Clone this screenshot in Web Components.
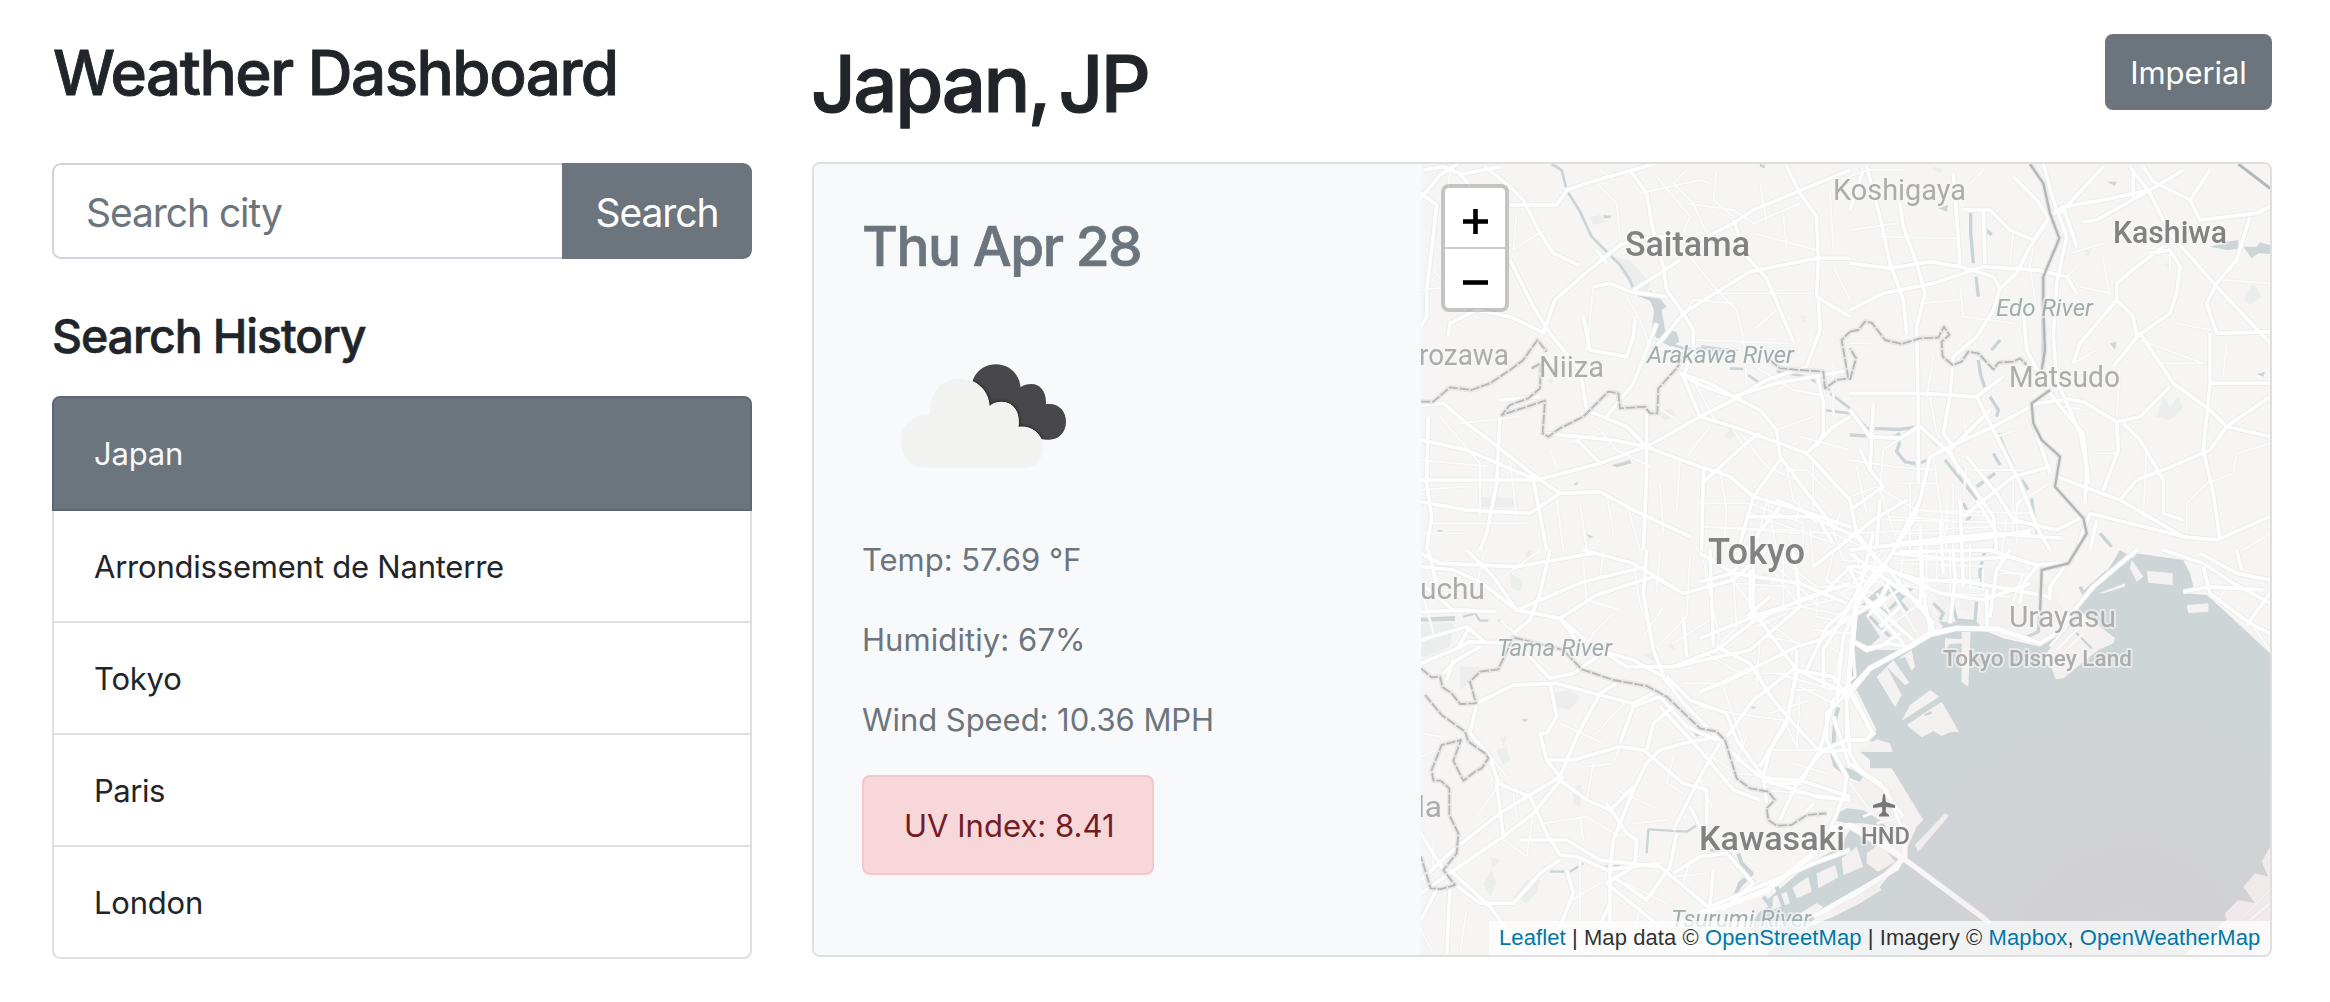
<!DOCTYPE html>
<html lang="en">
<head>
<meta charset="utf-8">
<title>Weather Dashboard</title>
<style>
  body { margin: 0; background: #fff; color: #212529; font-family: Inter, "Liberation Sans", sans-serif; font-size: 31px; line-height: 48px; }
</style>
</head>
<body>
<weather-dashboard>
  <page-title slot="side">Weather Dashboard</page-title>
  <city-search slot="side" placeholder="Search city">Search</city-search>
  <search-history slot="side" label="Search History">
    <history-item active>Japan</history-item>
    <history-item>Arrondissement de Nanterre</history-item>
    <history-item>Tokyo</history-item>
    <history-item style="--ls:-.47px">Paris</history-item>
    <history-item>London</history-item>
  </search-history>
  <city-header slot="main" city="Japan, JP"><unit-toggle>Imperial</unit-toggle></city-header>
  <weather-card slot="main" date="Thu Apr 28">
    <cloud-icon slot="icon"></cloud-icon>
    <weather-stat>Temp: 57.69 °F</weather-stat>
    <weather-stat style="--ls:.08px">Humiditiy: 67%</weather-stat>
    <weather-stat style="--ls:-.05px">Wind Speed: 10.36 MPH</weather-stat>
    <uv-badge>UV Index: 8.41</uv-badge>
    <city-map slot="map"></city-map>
  </weather-card>
</weather-dashboard>

<script>
const define = (name, html) => customElements.define(name, class extends HTMLElement {
  constructor() {
    super();
    const attr = key => this.getAttribute(key) || '';
    this.attachShadow({ mode: 'open' }).innerHTML = typeof html === 'function' ? html(attr) : html;
  }
});

define('weather-dashboard', `
<style>
  :host { display: flex; gap: 60px; padding: 0 58px 0 52px; height: 1002px; box-sizing: border-box; }
  aside { width: 700px; flex: none; padding-top: 35px; }
  main { flex: 1; padding-top: 34px; }
</style>
<aside><slot name="side"></slot></aside>
<main><slot name="main"></slot></main>`);

define('page-title', `
<style>
  :host { display: block; }
  h2 { margin: 0; padding-left: 1px; font-size: 62px; line-height: 76px; font-weight: 500; letter-spacing: -1.5px; -webkit-text-stroke: .9px; white-space: nowrap; }
</style>
<h2><slot></slot></h2>`);

define('city-search', attr => `
<style>
  :host { display: flex; height: 96px; margin-top: 52px; font-size: 39px; letter-spacing: -1.07px; }
  .field { flex: 1; box-sizing: border-box; display: flex; align-items: center; border: 2px solid #ced4da; border-right: 0; border-radius: 9px 0 0 9px; padding: 3px 32px 0; color: #6c757d; }
  button { all: unset; box-sizing: border-box; width: 190px; padding-top: 3px; text-align: center; background: #6c757d; color: #fff; border-radius: 0 9px 9px 0; letter-spacing: -1.07px; }
</style>
<div class="field">${attr('placeholder')}</div>
<button type="button"><slot></slot></button>`);

define('search-history', attr => `
<style>
  :host { display: block; margin-top: 48px; }
  h4 { margin: 0 0 31px; font-size: 46.5px; line-height: 58px; font-weight: 500; letter-spacing: -1.1px; -webkit-text-stroke: .6px; }
  .list { display: flex; flex-direction: column; }
</style>
<h4>${attr('label')}</h4>
<div class="list"><slot></slot></div>`);

define('history-item', `
<style>
  :host { display: flex; align-items: center; box-sizing: border-box; height: 112px; padding: 1px 40px 0; border: solid #dfdfdf; border-width: 0 2px 2px; letter-spacing: var(--ls, -.21px); background: #fff; }
  :host([active]) { height: 115px; padding-top: 0; border: 2px solid #5f6872; background: #6c757d; color: #f8f9fa; border-radius: 8px 8px 0 0; }
  :host(:last-of-type) { border-radius: 0 0 8px 8px; }
</style>
<slot></slot>`);

define('city-header', attr => `
<style>
  :host { display: flex; justify-content: space-between; align-items: flex-start; height: 128px; }
  h1 { margin: 2px 0 0; font-size: 78px; line-height: 96px; font-weight: 500; letter-spacing: -2.5px; word-spacing: -8px; text-indent: -1px; -webkit-text-stroke: 1.1px; }
</style>
<h1>${attr('city')}</h1><slot></slot>`);

define('unit-toggle', `
<style>
  :host { display: flex; width: 167px; height: 76px; padding-top: 1px; box-sizing: border-box; align-items: center; justify-content: center; background: #6c757d; color: #fff; border-radius: 8px; letter-spacing: -.09px; }
</style>
<slot></slot>`);

define('weather-card', attr => `
<style>
  :host { display: flex; box-sizing: border-box; width: 1460px; height: 795px; border: 2px solid #dfdfdf; border-radius: 8px; overflow: hidden; }
  .body { width: 607px; flex: none; box-sizing: border-box; padding: 49px 48px 0; background: #f8f9fb; color: #6c757d; }
  h3 { margin: 0 0 32px; font-size: 55px; line-height: 66px; font-weight: 500; letter-spacing: -1.5px; -webkit-text-stroke: .7px; }
</style>
<div class="body">
  <h3>${attr('date')}</h3>
  <slot name="icon"></slot>
  <slot></slot>
</div>
<slot name="map"></slot>`);

define('weather-stat', `
<style>:host { display: block; margin-bottom: 32px; letter-spacing: var(--ls, -.03px); white-space: nowrap; }</style>
<slot></slot>`);

define('uv-badge', `
<style>
  :host { display: flex; box-sizing: border-box; width: 292px; height: 100px; margin-top: -1px; padding: 1px 0 0 40px; align-items: center; background: #f8d7da; border: 2px solid #f5c6cb; border-radius: 8px; color: #721c24; letter-spacing: .03px; }
</style>
<slot></slot>`);

define('cloud-icon', `
<style>:host { display: block; width: 206px; height: 225px; } svg { display: block; }</style>
<svg width="206" height="200" viewBox="0 0 206 200">
  <defs><filter id="soft" x="-20%" y="-20%" width="140%" height="140%"><feGaussianBlur stdDeviation="4"/></filter>
  <clipPath id="dark"><path d="M279 120C290 90 318 73 348 73C385 73 417 98 422 142C430 135 442 132 455 132C480 132 500 155 498 193C535 188 558 212 558 246C558 278 535 299 508 299C495 299 490 298 482 296L430 290L300 200Z"/></clipPath>
  <path id="lt" d="M135 383C92 383 62 350 62 304C62 255 100 222 150 224C150 150 190 115 238 116C290 118 325 150 328 202C335 190 352 187 366 187C400 188 420 215 414 262C460 255 489 290 489 322C489 360 465 383 435 383Z"/></defs>
  <g transform="translate(18 29) scale(.33333)">
    <path fill="#48484a" d="M279 120C290 90 318 73 348 73C385 73 417 98 422 142C430 135 442 132 455 132C480 132 500 155 498 193C535 188 558 212 558 246C558 278 535 299 508 299C495 299 490 298 482 296L430 290L300 200Z"/>
    <g clip-path="url(#dark)"><use href="#lt" fill="#222" stroke="#222" stroke-width="8" filter="url(#soft)"/><use href="#lt" fill="#f8f9fb" stroke="#f8f9fb" stroke-width="3"/></g>
    <use href="#lt" fill="#f2f2f0"/>
  </g>
</svg>`);

/* Map geometry is kept in sheets, each drawn at three units per pixel. */
const sheet = (x, y, content) => `<g transform="translate(${x} ${y}) scale(.33333)">${content}</g>`;
const roads = (cls, list) => list.map(d => `<path class="${cls}" d="M${d}"/>`).join('');

const NW = {
  major: [
    '63 145L120 75L175 40M70 60L130 50L180 70L210 110M175 75L300 50M255 50L330 110L370 150L415 240L460 310L535 345M330 165L470 165L500 120L590 90L700 60L770 40',
    '63 130L110 165L95 300L80 420L80 500L63 530M145 560L150 520L230 480L330 500L435 550M330 330L400 470L450 550L490 600',
    '430 550L465 450L550 375L660 285L700 270L790 260L900 270L1000 220L1060 180L1180 130L1350 60M590 300L620 340',
    '690 60L740 130L755 220L790 350L800 420L850 490L880 540L880 600L850 680L900 800',
    '1000 740L930 700L840 670M760 600L850 490L960 420L1050 365L1250 325L1350 325M700 420L780 370L840 330M580 410L630 400L690 425L800 440',
    '1160 50L1200 130L1250 200L1255 330L1250 440L1350 500M1000 210L1040 320L1100 385L1140 480L1180 575M1255 450L1260 540L1220 650L1100 690L1010 740',
    '840 670L900 705L1000 740L1080 780L1130 840L1140 920L1200 1000L1300 1130M1000 740L1130 700L1350 660M900 800L1000 830L1140 880L1220 910L1350 1050',
    '63 765L130 760L200 820L280 880L420 990L480 1030L600 1025L700 1080L870 1160M63 870L200 900L410 990L600 940L750 885L900 800L1020 740',
    '63 990L420 990M63 1055L200 1080L390 1090L480 1030M300 800L290 1000L260 1150L240 1200M400 990L440 1200M85 800L80 1000L95 1100L80 1200',
    '530 870L600 940M430 850L540 860L640 870L740 890L790 910L900 950L990 980L1060 1040L1200 1080L1350 1130M740 790L740 970L730 1200M490 600L540 660L560 780L680 830L740 890',
    '910 960L905 1200M905 1000L1050 870L1080 850M1220 910L1300 830L1350 800M1140 930L1060 1040L1020 1180M620 800L700 700L740 600L770 520M550 500L570 600L680 620L700 560L705 500M300 750L420 740M1250 670L1270 760L1270 850L1250 890'
  ],
  minor: [
    '350 190L340 300L400 260L440 240M150 60L140 200L160 400M200 120L310 250M60 420L160 410M100 360L210 500M590 100L650 160L660 260M860 60L820 100L880 160L920 250M770 80L870 200L830 300M720 130L900 90L930 100M950 60L940 150L1000 200M600 60L640 90M860 160L1000 180L1060 220L1200 160M870 320L950 420L1010 480L1030 560',
    '950 430L1240 430M860 480L880 450L1000 460M1060 250L1250 300M1080 100L1100 220M1150 190L1160 300M1290 130L1300 300M1300 350L1350 450M580 410L560 600M680 440L720 510L750 590M400 600L460 640M1030 570L1040 700M1130 480L1060 540M890 570L1170 580',
    '120 800L240 940L240 1100M180 820L360 800M330 930L350 1100M450 900L470 950M500 880L600 850M60 930L270 950M90 1120L380 1120M470 1050L490 1200M540 1060L560 1200M620 1030L640 1150M680 1060L720 1200M780 1000L790 1150M840 930L830 1080M960 960L980 1080L970 1200M1030 860L1100 950L1190 990M1000 840L1040 900M1130 840L1240 800M880 690L950 820M930 830L860 920M770 770L830 810M590 830L650 900L750 950',
    '1050 1060L1210 1120L1210 1200M1100 1040L1130 1200M1160 950L1180 1050L1250 1120M1240 930L1240 1080M1170 960L1220 960L1280 1020M1050 1090L1300 1180M920 1130L1200 1150M900 1060L1050 1060M1200 860L1350 900M1300 640L1300 800M1050 640L1180 720L1290 740M60 1020L200 1010M60 1150L200 1150'
  ],
  edge: ['63 755L100 755L150 712L215 720L270 700L330 660L370 630L412 570L440 605M395 655L422 640L420 715L385 745L330 765L305 795L435 752L428 850L445 860L480 835L550 800L610 740L625 725L655 730L660 775L735 770L750 790L772 790L775 715L830 655L850 620M1110 630L1140 655L1200 660L1270 665L1275 715L1310 690L1345 685L1325 570L1350 545']
};
const NE = {
  major: [
    '0 340L120 355L240 335L330 350L430 380L450 415M0 480L100 430L250 400L400 350L560 360L650 380L680 430',
    '50 50L90 200L120 340L160 450L170 550M150 160L160 230L200 340L225 430L200 530L205 800L205 1000M310 70L320 200L330 350M400 180L405 340M340 180L420 180L480 240L550 270L600 200L640 170L760 150L900 120L1000 60',
    '0 180L40 60M490 80L560 150L600 210M580 40L610 150L650 260L620 400L610 560L620 690L690 850L710 950L705 1060M630 190L760 50M640 170L680 290M700 215L740 210L900 120M850 60L850 140',
    '840 50L900 130L960 250L1030 330L1100 410L1260 580M880 50L910 95L1020 150L1080 60M1020 150L1050 210L1220 190L1260 170M1200 200L1160 330L1100 400L1070 460L1100 550L1260 545',
    '600 200L540 290L500 370L450 415L430 480L380 560L310 620L300 740L280 850L310 890M520 480L530 600L600 730L640 780L700 850L715 1000',
    '940 290L860 350L800 400L800 450L690 580L670 640M800 450L850 500L860 560L960 490L980 430L990 350L960 300L900 310M790 650L870 550L970 700L1080 780L1130 830L1260 860M1080 550L1080 700L1060 900L1090 1030L1110 1170',
    '1260 700L1080 700M0 730L210 730L380 740L460 680M640 745L700 755L800 815L870 800L960 710M1260 740L1130 830L1080 900L940 960L860 990L810 1050M820 820L870 870L940 990L940 1090L1000 1110',
    '800 815L805 900L760 1020M380 740L440 860L510 1000L560 1130L600 1200M540 790L600 970M300 890L450 820L560 760L640 750M620 980L700 1010L810 1050L1000 1160M720 1090L880 1130L1000 1160L1100 1170L1260 1100M720 1090L680 1200M740 1110L720 1200',
    '0 780L60 860L150 865L210 830L290 900L430 1100L440 1200M330 970L300 900L420 780M300 890L240 920L210 1050L130 1200M350 920L440 1030L490 1110L620 1140L700 1100M0 1080L100 1010L60 960L30 900M0 1200L430 1150L640 1165M340 1100L490 980L600 950M70 760L60 960'
  ],
  minor: [
    '0 240L140 220M90 260L320 265M0 80L50 60L160 60M400 60L360 100M210 460L330 450M330 410L340 500L490 520M490 250L480 340M660 310L760 280M550 290L540 350L560 480M690 410L780 430M650 380L680 350M340 170L310 120M740 600L670 640M870 570L1060 640L930 640M1120 390L1260 400M980 520L1080 540M1130 580L1120 680',
    '60 580L0 580M240 740L260 850M0 930L130 950L260 960M100 900L90 1020L150 1200M200 830L100 900M0 1040L80 1010L200 1080L420 1100M120 1100L300 1110M150 1000L260 1000M250 920L290 1200M180 1000L180 1200M310 1000L310 1200M350 950L340 1040M490 990L490 1150M370 960L520 960M440 860L500 840M230 740L250 620M340 800L350 860M730 910L800 910M810 660L800 800M700 780L640 770M890 890L880 1100M1260 880L1160 910L1150 970L1070 1000L1010 1060L1010 1150M1180 1200L1260 1150M760 330L780 440M960 310L960 360M0 1150L430 1130M20 950L50 1090M500 1180L500 1060L600 1000'
  ],
  edge: ['0 545L25 540L45 515L65 518L105 570L155 582L210 565L265 563L282 530L298 555L275 575L278 620L308 645L335 635L355 605L385 610L430 658L445 638L490 635L510 625L530 645', '0 690L18 625L0 595']
};
const SW = {
  major: [
    '63 50L160 60L240 95L350 180L480 205L530 270M63 10L120 40L350 50L580 10M85 0L120 150M200 0L280 80L350 180L550 95L740 50M450 0L420 130L390 210L340 250M63 100L160 180L290 185M63 185L210 180',
    '550 0L700 40L850 130L1000 90L1100 0M740 0L730 130L760 300L800 400M480 205L590 135L760 80L850 130M63 340L160 300L210 275L350 280M63 270L200 230L260 280M210 230L170 300',
    '350 280L450 385L520 370L620 300M130 370L170 330L240 290M160 330L140 390M230 460L340 405L470 400L580 430L700 460L760 430M450 400L470 500L440 550L420 550L440 630L480 680',
    '230 460L210 550L270 620L295 700L390 740L440 850L480 915L530 920L620 960L780 940M480 205L590 300L700 330L790 380L850 460L950 560L1030 640L1090 685L1200 690L1350 740',
    '600 300L680 350L820 350L950 300L1060 215L1200 150L1350 100M820 350L1050 300L1200 170M950 290L1050 340L1120 450L1180 520L1260 605L1350 600M800 380L870 450L980 490L1010 570L1090 680L1100 760',
    '63 990L160 900L300 790L480 680L530 560L600 430L650 400M520 630L660 590L730 600L850 700L920 720L920 820M660 580L700 470L780 440L860 530L950 570',
    '740 640L700 720L640 870L630 960L630 1120M740 640L780 600L850 580L960 560M740 600L760 520L820 470M480 690L560 750L630 780L700 710M440 630L520 630',
    '290 700L310 860L250 900L120 990L63 1030M310 860L400 790L490 680M63 850L130 960M160 1000L240 1060L340 1060L420 970L480 930M150 960L270 1070L350 1180L380 1210M150 1020L140 1210M110 1020L63 1110',
    '360 870L500 870L600 930L780 950L900 1050L980 1120M620 760L680 850L710 870L705 950M640 980L740 1050L810 950L830 850M820 840L900 680L960 580M780 470L900 600L1000 720L1080 750M820 970L900 920L980 910L1060 1000L970 1080M700 950L620 1000L780 1130M630 1060L560 1210',
    '900 830L870 770M1060 215L1060 0M1200 170L1180 0M1220 360L1280 230L1350 170M930 0L940 290M1190 370L1160 520L1110 600L1090 680M1190 350L1060 450L980 560M1090 690L1250 740L1350 750M1300 500L1350 650M1180 830L1240 760M1110 700L1200 700L1260 600L1300 450L1350 400',
    '850 200L860 320M1040 200L1110 140M350 1210L480 1130L520 1030L500 960M940 960L930 1070L1100 1000L1240 940L1350 900'
  ],
  minor: [
    '250 20L220 150M310 80L420 0M100 80L250 150M550 40L560 150L660 180M610 0L600 90M700 40L720 160L750 240M780 0L770 130M640 190L580 250L560 290M790 170L730 260M870 20L860 200L780 280M1000 90L1010 230L960 280M990 0L1000 90M1130 50L1260 170M1100 190L1300 150M1100 260L1200 280M850 400L980 400M970 410L1000 500M1050 350L920 420',
    '560 750L580 640M480 520L610 580M590 550L680 450M660 590L640 640L560 650M820 620L800 700L850 730M700 820L800 810M650 720L780 780M900 690L940 780M1040 560L980 700M340 730L350 800M230 570L320 680M400 790L380 920L300 860M550 870L540 800M660 860L560 800L430 820M820 980L920 970M870 930L850 1000M680 1000L800 1060M540 920L540 1110M100 880L100 960M63 1140L100 1210M200 1080L180 1210M1190 420L1250 420M1100 600L1250 600M1200 430L1190 600M300 700L230 800M63 620L110 600M63 550L120 560M63 110L100 250M300 210L400 300M820 280L930 210M500 1060L600 1000M720 1070L700 1160M1240 240L1350 250M1130 370L1300 420M1000 100L1160 110M1150 0L1150 170'
  ],
  edge: ['63 355L95 382L120 380L128 412L155 430L180 462L228 460L210 395L240 365L295 358L340 262L490 300L545 358L640 390L740 408L800 440L900 535L950 545L975 570L1010 685L1050 715L1105 725L1125 750L1100 775L1105 810L1130 827L1175 825L1220 795L1280 790', '75 435L125 495L195 545L205 575L255 610L265 625L245 655L225 665L190 692L160 632L183 570L125 585L95 660L100 692L122 692L148 715L148 795L175 850L170 910L130 960L165 1005L125 1017L92 1015L63 920']
};
const SE = {
  land: '650 240L700 190L795 265L790 280L745 300L640 385L617 388L605 355L570 330ZM80 380L110 350L155 435L135 472ZM110 350L130 330L178 398L165 405ZM140 330L185 300L195 350L185 362L165 320ZM155 512L180 465L240 420L268 440ZM170 525L275 455L327 545L300 547L275 558L250 543L215 562ZM335 245L362 245L355 410L335 395ZM285 265L335 268L335 280L300 282L285 300ZM30 605L128 605L120 580L80 568L45 590ZM195 885L285 790L297 797L205 905ZM890 62L968 70L968 105L895 98ZM1010 165L1075 160L1075 185L1015 190ZM845 30L880 80L860 95L840 55ZM745 130L825 100L825 110L760 130Z',
  major: [
    '0 430L60 355L180 290L240 255L320 235L440 237L540 270L570 280L610 255L730 110L860 0', '0 570L50 570L65 550L10 430', '0 640L50 680L110 720L160 850L165 920L100 980L0 1045', '0 830L100 890L180 940L410 1110',
    '0 10L110 90L210 160L240 210L250 240M110 60L210 90L350 95L600 140M130 10L330 30L480 20L560 45L640 40M0 60L40 140L190 270M20 110L70 180L160 280M60 190L110 140M90 230L150 170M120 90L90 150L20 190M210 0L215 90L210 160M310 0L315 90L300 220M410 120L410 240M480 0L440 60L420 200M560 50L520 100L510 160',
    '940 0L1060 40L1150 100L1260 160M1000 125L1080 110L1240 120M1060 50L1080 130L1200 220L1260 250M1050 10L1160 70L1260 90M1190 225L1260 130M0 270L50 295L90 290L150 250', '1160 0L1175 60M650 40L600 110L600 150M1260 1060L1200 1110'
  ],
  minor: ['160 0L150 100M260 0L260 90M360 0L360 90M150 40L420 50M130 100L290 130L480 140M360 110L400 120L400 60M620 300L680 240M640 310L700 250M600 290L650 230M10 300L15 380L0 390M0 700L60 780M40 800L110 770M80 820L160 800M450 60L540 80M0 110L50 60L110 20M30 90L100 0M1130 110L1100 160M520 70L480 180M1210 230L1260 300M1260 1020L1180 1100']
};
const CENTRE = {
  major: ['0 245L100 220L150 130L240 20M150 210L150 320L290 510L440 580M0 415L160 350L370 280L450 200L550 200M550 200L720 280L850 300L990 250M550 200L640 60L660 0M450 0L470 100L550 200M440 590L470 300L560 200M430 590L380 640L380 720L440 830L430 890L390 990M440 590L440 720L370 750L290 850L240 960M600 135L700 130L890 110L990 90M600 155L870 150L990 190M530 140L540 0M0 575L90 540L290 440M290 510L400 530L440 590M290 510L260 660L180 800M290 440L360 420L450 350',
    '550 190L480 300L430 410L410 600M520 100L480 260L430 350L370 450L370 560M550 190L700 370M470 430L500 450L560 430L630 440M660 80L670 280L690 390M600 130L760 110L990 100M780 0L790 260M720 60L730 220M830 0L890 100M140 50L330 50L470 110L530 180M230 0L350 50L400 130M340 200L520 60L620 0M0 160L100 220L300 250L440 310M290 450L290 540M450 580L520 700L500 720L440 720M440 630L450 760L480 810L540 850L610 950'],
  minor: ['0 80L250 90L400 100L530 160M10 180L40 330L60 420M90 230L180 350L290 430M210 200L300 320L450 350M220 160L350 260L460 260M270 110L300 250M330 80L340 200M390 60L430 180L540 190M400 160L380 240L450 300M440 200L560 260M400 240L520 280M460 150L500 260M420 280L560 210M430 320L500 320M350 290L350 350L450 370M370 400L460 400M390 440L420 460L400 560M580 100L720 100M560 60L990 70M600 180L730 180M650 30L990 40M680 130L680 290M750 150L750 280M810 130L810 270M650 240L840 240M530 280L610 400M560 250L650 400M500 350L620 250M540 400L660 310M170 380L260 340M0 450L120 520L290 520M180 420L170 550M210 640L330 600M100 640L250 660L290 740M0 620L100 640L130 740M300 560L420 620M280 790L380 820M190 870L400 890M20 760L110 820L200 830L330 850M740 10L740 100M920 50L900 200M900 220L990 220M960 0L940 70M200 0L180 90L160 200M300 0L290 60M420 40L400 100']
};
const SHEETS = [[NW, 1400, 150], [NE, 1850, 150], [SW, 1400, 550], [SE, 1850, 550], [CENTRE, 1700, 500]];
const layer = (cls, key) => SHEETS.map(([s, x, y]) => sheet(x, y, roads(cls, s[key]))).join('');
const EXPRESS = cls => sheet(1700, 500, roads(cls, ['430 590L510 505L630 440L690 400L770 385L890 387L990 420', '540 200L470 300L440 600']))
  + sheet(1700, 740, roads(cls, ['0 520L100 490L200 450L330 350L400 265L450 255L540 305L610 355L870 550', '340 530L480 450L590 385L615 340L610 250']));
const EAST = '540 42L580 100L600 190L628 265L580 380L580 480L585 600L575 660M600 720L545 760L550 820L575 870L630 920L615 1010L700 1105L710 1150L655 1240L575 1260L570 1390';

define('city-map', `
<style>
  :host { display: flex; flex-direction: column; position: relative; flex: 1; background: #f6f5f4; overflow: hidden; }
  .tiles { display: block; width: 849px; height: 791px; filter: blur(.5px); }
  path { fill: none; stroke-linejoin: round; }
  .casing { stroke: #ebeeed; stroke-width: 17; }
  .major { stroke: #fefefe; stroke-width: 10.5; }
  .minorcase { stroke: #edf0ef; stroke-width: 10; }
  .minor { stroke: #fbfbfb; stroke-width: 5.5; }
  .express { stroke: #fdfdfd; stroke-width: 15; }
  .edgeglow { stroke: #e3e3e3; stroke-width: 15; opacity: .7; }
  .edge { stroke: #b9b8b8; stroke-width: 5.5; stroke-dasharray: 28 5; }
  .east { stroke: #b3b6b6; stroke-width: 7; }
  .water { fill: #cdd5d6; }
  .river { stroke: #cad4d6; }
  .land { fill: #f4f2f1; }
  .park { fill: #ebeeed; }
  text { font-family: Roboto, "Open Sans", sans-serif; font-size: 30px; fill: #acacac; stroke: #f7f6f5; stroke-width: 4px; stroke-opacity: .6; paint-order: stroke; stroke-linejoin: round; }
  .city { fill: #828282; font-weight: 500; }
  .stream { fill: #9fadaf; font-size: 24px; font-style: italic; }
  .zoom { position: absolute; left: 20px; top: 20px; width: 60px; height: 120px; display: flex; flex-direction: column; border: 4px solid rgba(0,0,0,.2); border-radius: 8px; background: #fff; background-clip: padding-box; }
  .zoom div { flex: 1; box-sizing: border-box; padding-top: 8px; display: flex; align-items: center; justify-content: center; }
  .zoom div:first-child { border-bottom: 2px solid #ccc; }
  .zoom svg { width: 25px; height: 25px; }
  .zoom path { stroke: #000; stroke-width: 4.6; }
  .credit { position: absolute; right: 0; bottom: 0; box-sizing: border-box; width: 781px; height: 34px; padding: 0 10px; background: rgba(255,255,255,.7); color: #333; font: 22px/33px "Liberation Sans", Arial, sans-serif; letter-spacing: .09px; white-space: nowrap; }
  a { color: #0078a8; }
</style>
<svg class="tiles" viewBox="1421 164 849 791">
  <defs><radialGradient id="rain" gradientUnits="userSpaceOnUse" cx="2130" cy="960" r="330">
    <stop offset="0" stop-color="#dcc6cc" stop-opacity=".34"/><stop offset=".5" stop-color="#dcc8ce" stop-opacity=".22"/><stop offset="1" stop-color="#dccace" stop-opacity="0"/></radialGradient></defs>
  ${sheet(1400, 150, `
    <path class="park" d="M640 320L690 330L750 400L740 430L700 420ZM240 1040L350 1045L355 1070L240 1070ZM775 790L810 775L830 795L795 812ZM970 860L990 835L1010 855L990 870ZM570 200L600 195L620 215L580 225ZM1200 495L1220 500L1215 520ZM440 690L460 685L455 705Z"/>
    <path class="water" d="M750 420L780 445L800 470L785 480L795 540L830 545L838 575L810 590L790 575L805 560L770 565L755 545L762 480L745 440ZM635 945L690 930L695 940L650 952ZM520 1003L535 995L530 1007ZM555 1150L580 1160L570 1165ZM610 195L635 197L630 205L612 205ZM110 1140L130 1140L120 1150ZM903 585L1015 600L1000 610L905 598Z"/>
    <path class="river" stroke-width="8" d="M455 42L485 60L500 120L540 185L575 260L615 300L660 345L690 390L705 430L755 450M790 575L850 595L990 600M1130 665L1220 680L1290 720M1270 780L1350 790M1290 730L1350 775M1045 675L1080 700M1080 45L1095 52M990 655L1030 657"/>
  `)}
  ${sheet(1850, 150, `
    <path class="park" d="M920 800L940 740L960 770L985 740L1000 775L960 810ZM1180 450L1210 395L1235 440L1200 465ZM940 345L960 335L960 360ZM700 300L725 300L715 320ZM240 50L280 55L270 70Z"/>
    <path class="water" d="M1080 290L1130 275L1165 270L1165 297L1130 300ZM1180 290L1220 290L1230 277L1260 285L1260 312L1225 310L1205 325ZM770 95L800 95L795 108ZM780 580L800 575L795 600ZM1220 672L1245 665L1240 680ZM265 175L295 165L290 185Z"/>
    <path class="river" stroke-width="10" d="M362 180L362 245L370 340M378 380L385 440M410 240L425 255M450 570L425 600M385 630L392 675L405 715M420 740L445 780L440 800M445 850L465 900L490 950M515 990L535 1020M545 1045L550 1090L562 1150M0 780L50 835L150 838L210 830L265 885M285 930L330 985L400 1070L435 1130L435 1200M0 855L130 862L150 850M150 875L140 905L165 935L200 942L235 930M430 910L450 945M380 1010L435 970M340 1060L360 1100L345 1120M1165 42L1260 115M750 1150L785 1190M578 380L580 640"/>
  `)}
  ${sheet(1400, 550, `
    <path class="park" d="M330 70L370 95L360 125L335 115ZM460 430L510 420L540 440L510 480L470 470ZM250 1000L275 960L290 1000L270 1040ZM340 1040L380 990L420 990L410 1030L380 1060ZM290 600L320 590L330 630L310 645ZM270 920L300 930L280 955ZM63 220L160 220L150 290L80 320L63 320ZM180 350L240 350L220 390L180 420ZM730 315L770 300L765 335ZM1060 80L1100 70L1110 105L1070 110ZM520 710L545 705L540 770L520 760ZM300 560L320 560L310 590ZM370 10L395 0L390 30ZM800 290L815 280L825 300Z"/>
    <path class="water" d="M63 203L165 198L165 213L63 215ZM362 508L385 508L375 516ZM1050 470L1070 470L1060 478ZM880 550L905 555L890 560Z"/>
    <path class="river" stroke-width="7" d="M190 200L225 190L240 212L265 212M295 210L320 225L335 245M740 910L745 838L860 845L900 820M450 965L510 965L550 940M610 950L660 948M930 900L990 910L1005 945L1055 975L1020 1010L1000 1040"/>
  `)}
  ${sheet(1850, 550, `
    <path class="water" d="M1260 310L1110 170L1070 135L1000 130L1030 110L1020 70L1000 30L930 20L860 10L850 25L810 0L780 50L700 150L650 240L570 290L460 265L400 240L380 215L280 215L180 200L150 120L120 90L70 130L20 180L20 220L15 290L0 290L0 415L20 420L80 540L50 570L120 590L125 605L30 605L60 630L60 655L125 655L220 810L200 830L160 920L90 1010L30 1060L-50 1100L-200 1160L-250 1215L1000 1215L1130 1110L1125 1090L1165 1050L1215 1060L1180 1010L1215 970L1255 980L1235 935L1260 890Z"/>
    <path class="land" d="M50 200L120 130L230 170L280 230L180 300L50 300L90 260ZM260 90L300 90L300 210L260 210ZM325 140L370 140L370 185L335 180ZM400 50L600 100L650 200L570 280L420 235Z"/>
    <path class="river" stroke-width="10" d="M105 80L120 120L180 190M60 145L160 240M45 185L130 270M105 190L190 110M250 160L280 190L270 210M300 130L320 210L375 215L380 150M405 0L390 60L390 120M570 180L565 245L530 262M690 110L700 130L770 65"/>
    <path class="land" d="M${SE.land}"/>
    <path class="river" stroke-width="7" d="M225 495L245 487M670 240L725 295"/>
  `)}
  ${sheet(1700, 740, `
    <path class="water" d="M400 225L440 205L490 210L545 245L560 262L490 250L440 250L400 240ZM450 270L540 320L590 345L600 375L500 450L410 490L340 540L320 560L270 610L170 610L150 560L200 480L330 370L420 320ZM390 40L410 50L430 80L460 90L490 110L480 125L440 110L400 80Z"/>
    <path class="land" d="M350 400L405 375L415 412L355 445ZM425 355L470 320L490 380L430 405ZM275 445L325 410L335 455L290 475ZM500 340L540 310L585 365L535 395L500 370ZM220 470L260 455L270 490L215 510ZM390 500L530 430L545 450L480 490L470 475L400 530ZM150 490L190 470L205 500L170 520ZM300 520L350 490L370 500L310 550ZM440 130L500 125L580 150L600 240L560 230L440 180Z"/>
    <path class="river" stroke-width="12" d="M115 340L125 370L155 400L120 430L105 470M415 -100L405 -60L400 20M340 370L345 450M230 440L250 500M265 430L290 490M190 470L215 500"/>
  `)}
  ${layer('minorcase', 'minor')}${layer('casing', 'major')}${layer('minor', 'minor')}${layer('major', 'major')}
  ${EXPRESS('express')}
  ${[[NW,1400,150],[NE,1850,150],[SW,1400,550]].map(([s,x,y]) => sheet(x, y, roads('edgeglow', s.edge) + roads('edge', s.edge))).join('')}
  ${sheet(1850, 150, roads('edgeglow', [EAST]) + roads('east', [EAST, '1165 42L1260 115']))}
  <rect x="1800" y="600" width="470" height="355" fill="url(#rain)"/>
  <path style="fill:#777" transform="translate(1873 794)" d="M10 1Q11 -2 12 1L13 8L22 11L22 14L13 13L12.700 18L16 21L16 22.500L6 22.500L6 21L9.300 18L9 13L0 14L0 11L9 8Z"/>
  <text class="city" x="1625" y="256" textLength="125" lengthAdjust="spacingAndGlyphs" style="font-size:35px">Saitama</text>
  <text class="city" x="2113" y="243" textLength="114" lengthAdjust="spacingAndGlyphs" style="font-size:32px">Kashiwa</text>
  <text class="city" x="1708" y="564" textLength="97" lengthAdjust="spacingAndGlyphs" style="font-size:37px">Tokyo</text>
  <text class="city" x="1699" y="850" textLength="146" lengthAdjust="spacingAndGlyphs" style="font-size:34px">Kawasaki</text>
  <text class="city" x="1861" y="844" textLength="49" lengthAdjust="spacingAndGlyphs" style="font-size:24px">HND</text>
  <text x="1833" y="200" textLength="133" lengthAdjust="spacingAndGlyphs">Koshigaya</text>
  <text x="1539" y="377" textLength="65" lengthAdjust="spacingAndGlyphs">Niiza</text>
  <text x="1419" y="365" textLength="90" lengthAdjust="spacingAndGlyphs">rozawa</text>
  <text x="2009" y="387" textLength="111" lengthAdjust="spacingAndGlyphs">Matsudo</text>
  <text x="1420" y="599" textLength="65" lengthAdjust="spacingAndGlyphs">uchu</text>
  <text x="1407" y="817" textLength="35" lengthAdjust="spacingAndGlyphs">da</text>
  <text x="2009" y="627" textLength="107" lengthAdjust="spacingAndGlyphs">Urayasu</text>
  <text x="1943" y="666" textLength="189" lengthAdjust="spacingAndGlyphs" style="font-size:22px;font-weight:500">Tokyo Disney Land</text>
  <text class="stream" x="1647" y="363" textLength="147" lengthAdjust="spacingAndGlyphs">Arakawa River</text>
  <text class="stream" x="1996" y="316" textLength="97" lengthAdjust="spacingAndGlyphs">Edo River</text>
  <text class="stream" x="1497" y="656" textLength="115" lengthAdjust="spacingAndGlyphs">Tama River</text>
  <text class="stream" x="1671" y="927" textLength="140" lengthAdjust="spacingAndGlyphs">Tsurumi River</text>
</svg>
<div class="zoom">
  <div><svg viewBox="0 0 25 25"><path d="M0 12.500H25M12.500 0V25"/></svg></div>
  <div><svg viewBox="0 0 25 25"><path d="M0 12.500H25"/></svg></div>
</div>
<div class="credit"><a>Leaflet</a> | Map data © <a>OpenStreetMap</a> | Imagery © <a>Mapbox</a>, <a>OpenWeatherMap</a></div>`);
</script>
</body>
</html>
